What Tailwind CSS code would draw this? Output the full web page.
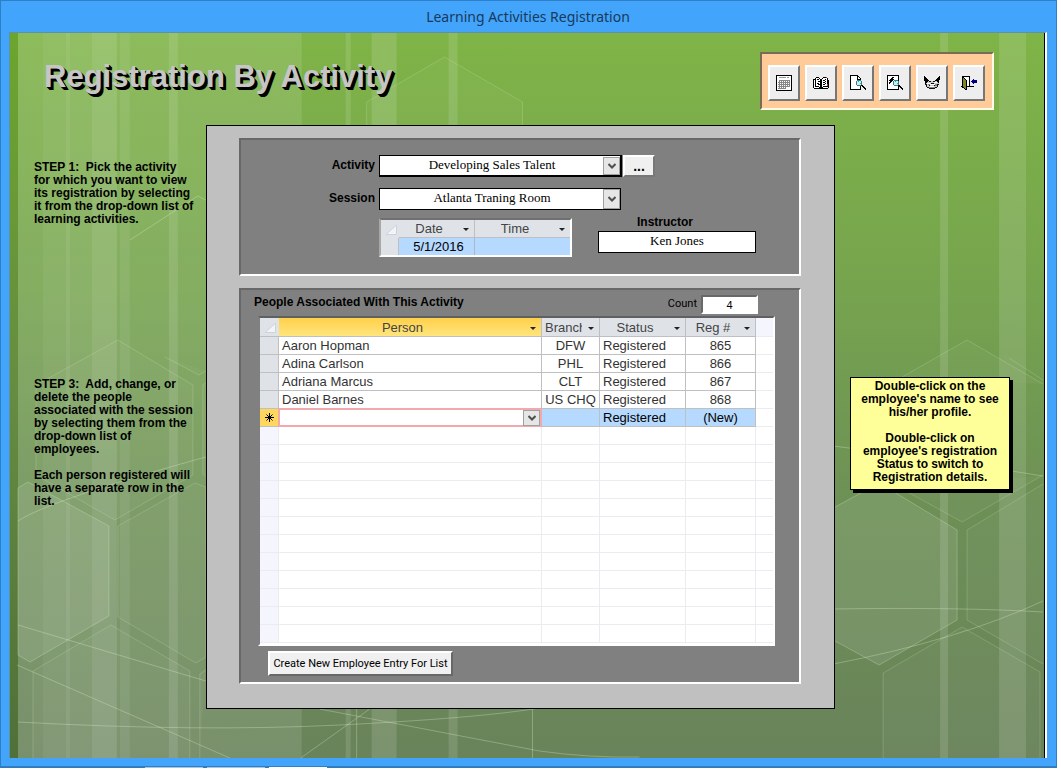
<!DOCTYPE html>
<html lang="en">
<head>
<meta charset="utf-8">
<title>Learning Activities Registration</title>
<script src="https://cdn.jsdelivr.net/npm/@tailwindcss/browser@4"></script>
</head>
<body class="flex min-h-screen flex-col bg-white font-['Liberation_Sans',sans-serif]">
<div class="flex flex-1 flex-col border border-[#2d7fc8] bg-[#43a4fb] pr-[9px] pb-2 pl-2">
  <div class="flex h-[31px] items-center justify-center font-['Noto_Sans',sans-serif] text-sm text-[#173a5c]">Learning Activities Registration</div>

  <main class="relative flex-1 border border-[#5a92ae] border-b-0 border-r-2 border-r-white bg-[#7fb24b]">
    <!-- backdrop: stripes, hexagons and arcs -->
    <svg class="absolute inset-0 h-full w-full border-r border-black" viewBox="10 33 1035 725" preserveAspectRatio="none" aria-hidden="true">
      <defs>
        <linearGradient id="base" x1="0" y1="0" x2="0" y2="1">
          <stop offset="0" stop-color="#7fb447"/><stop offset=".35" stop-color="#76a44e"/><stop offset=".65" stop-color="#6d9056"/><stop offset="1" stop-color="#69835a"/>
        </linearGradient>
        <linearGradient id="edge" x1="0" y1="0" x2="0" y2="1">
          <stop offset="0" stop-color="#6ca52e"/><stop offset=".5" stop-color="#658c41"/><stop offset="1" stop-color="#4f7038"/>
        </linearGradient>
      </defs>
      <rect x="10" y="33" width="1035" height="725" fill="url(#base)"/>
      <g fill="#fff">
        <rect x="18" y="33" width="284" height="725" opacity=".11"/>
        <rect x="43" y="33" width="74" height="725" opacity=".05"/>
        <rect x="66" y="33" width="4" height="725" opacity=".07"/>
        <rect x="92" y="33" width="25" height="725" opacity=".08"/>
        <rect x="120" y="33" width="10" height="725" opacity=".07"/>
        <rect x="169" y="33" width="9" height="725" opacity=".11"/>
        <rect x="346" y="33" width="5" height="725" opacity=".12"/>
        <rect x="372" y="33" width="25" height="725" opacity=".13"/>
        <rect x="449" y="33" width="9" height="725" opacity=".12"/>
        <rect x="941" y="33" width="8" height="725" opacity=".13"/>
        <rect x="1000" y="33" width="27" height="725" opacity=".12"/>
      </g>
      <rect x="10" y="33" width="8" height="725" fill="url(#edge)"/>
      <g fill="#fff" fill-opacity=".09" stroke="#e4f2d4" stroke-opacity=".28" stroke-width="1">
        <path d="M18 488 28 482 109 526V616L30 662 18 655Z"/>
        <path d="M834 508 880 483 958 530V620L880 665 834 640Z"/>
      </g>
      <g fill="#fff" fill-opacity=".03" stroke="#e4f2d4" stroke-opacity=".2" stroke-width="1">
        <path d="M115 520 193 475V385L118 340 36 385V475Z"/>
        <path d="M206 487 195 483 118 526V617L196 663 206 657Z"/>
        <path d="M33 758V671L111 625 190 671V758"/>
        <path d="M206 670 200 674V758"/>
        <path d="M206 371 199 375 165 357"/>
        <path d="M206 476 203 474V385L206 383"/>
        <path d="M367 126V102L445 57 523 102V126"/>
        <path d="M1044 484 968 530V620L1044 664"/>
        <path d="M884 758V673L963 627 1041 672V758"/>
        <path d="M905 490 963 522 1044 475M903 377 968 340 1044 384"/>
        <path d="M1044 380 1010 358"/>
      </g>
      <g fill="none" stroke="#e8f5da" stroke-opacity=".3" stroke-width="1">
        <path d="M18 521Q50 500 206 457M18 625 206 681M17 665 230 758M18 722Q200 732 340 725T540 708"/>
        <path d="M130 240 198 196 206 200M320 709 540 751Q590 758 640 757M301 758 370 709M357 709V758M533 709V758"/>
        <path d="M834 609Q960 607 1044 612M834 664Q960 640 1044 601M834 446Q940 458 1044 476"/>
      </g>
    </svg>

    <div class="relative">
      <header class="flex h-[92px] items-start justify-between pr-[51px] pl-[34px]">
        <h1 class="pt-6 text-[31px] leading-10 font-bold text-[#c6c6c6] [text-shadow:1px_1px_0_#000,2px_2px_0_#000,3px_3px_0_#000]">Registration By Activity</h1>
        <div class="mt-[19px] flex h-[58px] items-center gap-[5px] border-2 border-[#fffbe9] border-t-[#7b6a55] border-l-[#7b6a55] bg-[#ffcb99] pt-1 pr-[7px] pl-[6px]" role="toolbar" aria-label="Form tools">
          <button aria-label="Datasheet" class="grid h-9 w-8 place-items-center border-2 border-white border-r-[#777] border-b-[#777] bg-[#eee]">
            <svg width="16" height="16" viewBox="0 0 16 16" shape-rendering="crispEdges" fill="none" aria-hidden="true"><path d="M.5.5h15v15H.5z" fill="#fff" stroke="#000"/><path d="M3 2.500h7M11 2.500h2" stroke="#999"/><path d="M3 5.500h11M2 7.500h12M2 9.500h12M2 11.500h12M2 13.500h8M3.500 5v9M5.500 5v9M7.500 5v9M9.500 5v9M11.500 5v7M13.500 5v7" stroke="#888"/></svg>
          </button>
          <button aria-label="Catalog" class="grid h-9 w-8 place-items-center border-2 border-white border-r-[#777] border-b-[#777] bg-[#eee]">
            <svg width="16" height="16" viewBox="0 0 16 16" shape-rendering="crispEdges" fill="none" aria-hidden="true"><path d="M1 3h2V2h3v1h2v1h1V3h1V2h4v1h1v10H9v1H7v-1H1z" fill="#fff"/><path d="M2.500 3v9M.500 4v9M1 4.500h1M3 2.500h3M6.500 3v1M7.500 4v10M8.500 4v10M9.500 3v1M10 2.500h4M14.500 3v9M15.500 5v8M3 11.500h3M6 12.500h4M10 11.500h4M1 13.500h6M9 13.500h6M4 4.500h2M5 6.500h2M4 8.500h2M5 9.500h2M10 5.500h2M12 4.500h1M10 7.500h2M12 6.500h1M10 9.500h2M12 8.500h1" stroke="#000"/><path d="M13 2.500h1M14.500 9v2" stroke="#d32a3c"/></svg>
          </button>
          <button aria-label="Preview report" class="grid h-9 w-8 place-items-center border-2 border-white border-r-[#777] border-b-[#777] bg-[#eee]">
            <svg width="16" height="16" viewBox="0 0 16 16" shape-rendering="crispEdges" fill="none" aria-hidden="true"><path d="M0 0h8v1h1v1h1v1h1v12H0z" fill="#000"/><path d="M1 1h6v4h3v9H1zM8 2h1v1H8zM8 3h2v1H8z" fill="#fff"/><path d="M7 5h4v1h1v4h-1v1H7v-1H6V6h1z" fill="#baf4f4"/><path d="M7 5.500h4M6.500 6v4M11.500 6v4M7 10.500h4" stroke="#477b7b"/><path d="M8 6h1v1H8zM10 8h1v1h-1z" fill="#25baba"/><path d="M11 10h2v1h1v1h1v1h1v2h-1v-1h-1v-1h-1v-1h-1v-1h-1z" fill="#000"/></svg>
          </button>
          <button aria-label="Quick preview" class="grid h-9 w-8 place-items-center border-2 border-white border-r-[#777] border-b-[#777] bg-[#eee]">
            <svg width="16" height="16" viewBox="0 0 16 16" shape-rendering="crispEdges" fill="none" aria-hidden="true"><path d="M.5.5h11v14H.5z" fill="#fff" stroke="#000"/><path d="M5 2h2v1H6v1h1v1H6v1H5v1H4v1H3v1H2V7h1V6H2V5h1V4h1V3h1z" fill="#000"/><path d="M7 5h4v1h1v4h-1v1H7v-1H6V6h1z" fill="#baf4f4"/><path d="M7 5.500h4M6.500 6v4M11.500 6v4M7 10.500h4" stroke="#477b7b"/><path d="M8 6h1v1H8zM10 8h1v1h-1z" fill="#25baba"/><path d="M11 10h2v1h1v1h1v1h1v2h-1v-1h-1v-1h-1v-1h-1v-1h-1z" fill="#000"/></svg>
          </button>
          <button aria-label="Contacts" class="grid h-9 w-8 place-items-center border-2 border-white border-r-[#777] border-b-[#777] bg-[#eee]">
            <svg width="16" height="16" viewBox="0 0 16 16" shape-rendering="crispEdges" fill="none" aria-hidden="true"><path d="M2 5h3v1h6V5h3v3h1v2h-2v3h-2v1H5v-1H3v-3H1V8h1z" fill="#ccc"/><path d="M0 1h1v1h1v1h1v1h1v1h1v1H4v1H3v1H2v1H1V6H0zM15 1h1v4h-1v3h-1V7h-1V6h-2V5h1V4h1V3h1V2h1z" fill="#000"/><path d="M5 6.500h2M9 6.500h2M1 9.500h2M13 9.500h2M2.500 10v2M13.500 10v2M3 12.500h2M11 12.500h2M5 13.500h6M7 8.500h3M5 10.500h1M10 10.500h1" stroke="#111"/><path d="M3 8h3v1H3zM10 7h3v1h-3zM6 9h5v1H6zM6 11h4v1H6z" fill="#fff"/><path d="M4 9h2v1H4zM11 9h2v2h-2zM5 12h6v1H5z" fill="#888"/></svg>
          </button>
          <button aria-label="Close form" class="grid h-9 w-8 place-items-center border-2 border-white border-r-[#777] border-b-[#777] bg-[#eee]">
            <svg width="16" height="16" viewBox="0 0 16 16" shape-rendering="crispEdges" fill="none" aria-hidden="true"><path d="M2 1h6v10H2z" fill="#fff"/><path d="M1 1.500h8M8.500 1v10M0 11.500h2M6 11.500h7" stroke="#000"/><path d="M1 1h1v1h1v1h1v1h1v11H4v-1H3v-1H2v-1H1z" fill="#858521"/><path d="M1.500 1v12M2 2.500h1M3 3.500h1M4 4.500h1M5.500 5v10M2 12.500h1M3 13.500h1M4 14.500h1" stroke="#000"/><path d="M10 6h1V5h1V4h1v1h3v3h-3v1h-1V8h-1V7h-1z" fill="#000080"/></svg>
          </button>
        </div>
      </header>

      <div class="flex items-start">
        <aside class="w-[196px] shrink-0 pt-9 pl-6 text-xs leading-[13px] font-bold text-black">
          <p class="whitespace-pre">STEP 1:  Pick the activity
for which you want to view
its registration by selecting
it from the drop-down list of
learning activities.</p>
          <p class="mt-38 whitespace-pre">STEP 3:  Add, change, or
delete the people
associated with the session
by selecting them from the
drop-down list of
employees.</p>
          <p class="mt-[13px] whitespace-pre">Each person registered will
have a separate row in the
list.</p>
        </aside>

        <section class="mb-12 min-w-0 flex-1 border border-black bg-[#c0c0c0] pt-3 pr-[33px] pb-6 pl-8">
          <div class="h-[138px] border-2 border-white border-t-[#686868] border-l-[#686868] bg-[#808080] pt-[15px] pl-[66px]">
            <div class="flex h-[22px] items-center">
              <label for="activity" class="w-[68px] pb-[2px] text-right text-xs leading-4 font-bold">Activity</label>
              <div class="relative ml-1 h-[22px] w-[243px]">
                <select id="activity" class="block h-full w-full appearance-none rounded-none border-2 border-t border-l border-black bg-white pr-4 pb-[2px] font-['Liberation_Serif',serif] text-[13px] leading-4 [text-align-last:center]"><option>Developing Sales Talent</option></select>
                <span class="pointer-events-none absolute top-[2px] right-[2px] bottom-[2px] grid w-[17px] place-items-center border border-[#a0a0a0] bg-[#e6e6e6]"><svg width="8" height="6" viewBox="0 0 8 6" fill="none" stroke="#505050" stroke-width="2"><path d="M.5 1 4 4.500 7.500 1"/></svg></span>
              </div>
              <button class="ml-px h-[22px] w-8 border-2 border-white border-r-[#777] border-b-[#777] bg-[#f0f0f0] text-sm leading-4 font-bold" aria-label="Browse activities">...</button>
            </div>
            <div class="mt-[11px] flex h-[22px] items-center">
              <label for="session" class="w-[68px] pb-[2px] text-right text-xs leading-4 font-bold">Session</label>
              <div class="relative ml-1 h-[22px] w-[242px]">
                <select id="session" class="block h-full w-full appearance-none rounded-none border border-black bg-white pr-4 pb-[2px] font-['Liberation_Serif',serif] text-[13px] leading-4 [text-align-last:center]"><option>Atlanta Traning Room</option></select>
                <span class="pointer-events-none absolute top-px right-px bottom-px grid w-[17px] place-items-center border border-[#a0a0a0] bg-[#e6e6e6]"><svg width="8" height="6" viewBox="0 0 8 6" fill="none" stroke="#505050" stroke-width="2"><path d="M.5 1 4 4.500 7.500 1"/></svg></span>
              </div>
            </div>
            <div class="mt-2 flex items-start">
              <table class="ml-[72px] w-[193px] table-fixed border-separate border-spacing-0 border-2 border-white border-t-[#707070] border-l-[#a8a8a8] text-[13px] leading-[17px]">
                <colgroup><col class="w-[18px]"><col class="w-[76px]"><col></colgroup>
                <thead>
                  <tr class="h-[17px] bg-[#dfe3e8] text-[#444]">
                    <td class="p-0"><svg class="ml-1" width="12" height="11" viewBox="0 0 12 11"><path d="M11.500 1v9.500H1z" fill="#f2f4f7" stroke="#ccd3dc"/></svg></td>
                    <th scope="col" class="border-r border-b border-[#bcc0c6] p-0 font-normal"><span class="flex items-center"><span class="flex-1 pr-1">Date</span><svg class="mt-[2px] mr-[5px]" width="6" height="3" viewBox="0 0 6 3"><path d="M0 0h6L3 3z" fill="#222"/></svg></span></th>
                    <th scope="col" class="border-b border-[#bcc0c6] p-0 font-normal"><span class="flex items-center"><span class="flex-1 pr-1">Time</span><svg class="mt-[2px] mr-[5px]" width="6" height="3" viewBox="0 0 6 3"><path d="M0 0h6L3 3z" fill="#222"/></svg></span></th>
                  </tr>
                </thead>
                <tbody>
                  <tr class="h-[17px] bg-[#b5d9ff]">
                    <td class="border-r border-[#bcc0c6] bg-[#dfe3e8] p-0"></td>
                    <td class="border-r border-[#a9b8c8] p-0 pl-1 text-center">5/1/2016</td>
                    <td class="p-0"></td>
                  </tr>
                </tbody>
              </table>
              <div class="ml-[26px] flex w-[158px] flex-col">
                <label for="instructor" class="mb-[5px] pr-6 text-center text-xs leading-[8px] font-bold">Instructor</label>
                <input id="instructor" value="Ken Jones" class="h-[22px] w-full border border-black bg-white pb-[2px] text-center font-['Liberation_Serif',serif] text-[13px]">
              </div>
            </div>
          </div>

          <div class="mt-3 flex flex-col border-2 border-white border-t-[#686868] border-l-[#686868] bg-[#808080] pt-[3px] pb-[6px]">
            <div class="flex h-[23px] items-start justify-between pr-[41px] pl-[13px]">
              <h2 class="text-xs leading-[18px] font-bold">People Associated With This Activity</h2>
              <div class="flex items-center gap-1 pt-[2px]">
                <label for="count" class="font-['Roboto','Liberation_Sans',sans-serif] text-[11px]">Count</label>
                <input id="count" value="4" class="h-[19px] w-[57px] border-2 border-white border-t-[#686868] border-l-[#686868] bg-white text-center text-[11px]">
              </div>
            </div>
            <div class="mr-6 ml-[17px] overflow-hidden border-2 border-white border-t-[#606060] border-l-[#808080] bg-white">
              <table class="w-full table-fixed border-separate border-spacing-0 text-[13px] leading-[17px] text-[#333] [&_td]:p-0 [&_th]:p-0">
                <colgroup><col class="w-[19px]"><col><col class="w-[58px]"><col class="w-[86px]"><col class="w-[70px]"><col class="w-[17px]"></colgroup>
                <thead>
                  <tr class="h-[19px] bg-[#dfe3e8] text-[#444] [&>th]:border-r [&>th]:border-b [&>th]:border-[#bcc0c6] [&>th]:font-normal">
                    <td class="border-b border-[#bcc0c6]"><svg class="ml-1" width="12" height="11" viewBox="0 0 12 11"><path d="M11.500 1v9.500H1z" fill="#f2f4f7" stroke="#ccd3dc"/></svg></td>
                    <th scope="col" class="bg-linear-to-b from-[#ffd048] to-[#ffe57c]"><span class="flex items-center"><span class="flex-1 pr-1">Person</span><svg class="mt-[2px] mr-[5px]" width="6" height="3" viewBox="0 0 6 3"><path d="M0 0h6L3 3z" fill="#222"/></svg></span></th>
                    <th scope="col"><span class="flex items-center justify-between"><span class="ml-[3px] w-[37px] overflow-hidden text-left">Branch</span><svg class="mt-[2px] mr-[5px]" width="6" height="3" viewBox="0 0 6 3"><path d="M0 0h6L3 3z" fill="#222"/></svg></span></th>
                    <th scope="col"><span class="flex items-center"><span class="flex-1 pr-1">Status</span><svg class="mt-[2px] mr-[5px]" width="6" height="3" viewBox="0 0 6 3"><path d="M0 0h6L3 3z" fill="#222"/></svg></span></th>
                    <th scope="col"><span class="flex items-center"><span class="flex-1 pr-1">Reg #</span><svg class="mt-[2px] mr-[5px]" width="6" height="3" viewBox="0 0 6 3"><path d="M0 0h6L3 3z" fill="#222"/></svg></span></th>
                    <td class="border-b border-[#ebebf2] bg-[#f5f5fd]"></td>
                  </tr>
                </thead>
                <tbody class="[&_td]:border-r [&_td]:border-b [&_td]:border-[#c0c0c0] [&_td:last-child]:border-r-0 [&_td:last-child]:border-[#ebebf0]">
                  <tr class="h-[18px]"><td class="bg-[#dfe3e8]"></td><td><span class="pl-[3px]">Aaron Hopman</span></td><td class="text-center">DFW</td><td><span class="pl-[3px]">Registered</span></td><td class="text-center">865</td><td></td></tr>
                  <tr class="h-[18px]"><td class="bg-[#dfe3e8]"></td><td><span class="pl-[3px]">Adina Carlson</span></td><td class="text-center">PHL</td><td><span class="pl-[3px]">Registered</span></td><td class="text-center">866</td><td></td></tr>
                  <tr class="h-[18px]"><td class="bg-[#dfe3e8]"></td><td><span class="pl-[3px]">Adriana Marcus</span></td><td class="text-center">CLT</td><td><span class="pl-[3px]">Registered</span></td><td class="text-center">867</td><td></td></tr>
                  <tr class="h-[18px]"><td class="bg-[#dfe3e8]"></td><td><span class="pl-[3px]">Daniel Barnes</span></td><td class="text-center whitespace-nowrap">US CHQ</td><td><span class="pl-[3px]">Registered</span></td><td class="text-center">868</td><td></td></tr>
                  <tr class="h-[18px] bg-[#b5d9ff] text-black"><td class="bg-[#ffd75e]"><svg class="mx-auto" width="9" height="9" viewBox="0 0 9 9" stroke="#000" role="img" aria-label="New record"><path d="M4.500 0v9M0 4.500h9M1.500 1.500l6 6M7.500 1.500l-6 6"/></svg></td>
                    <td><div class="relative -m-px h-[19px]"><select aria-label="Person" class="block h-full w-full appearance-none rounded-none border-2 border-[#f2a9ae] bg-white"><option></option></select><span class="pointer-events-none absolute top-[2px] right-[2px] bottom-px grid w-[17px] place-items-center border border-[#a0a0a0] bg-[#e6e6e6]"><svg width="8" height="6" viewBox="0 0 8 6" fill="none" stroke="#505050" stroke-width="2"><path d="M.5 1 4 4.500 7.500 1"/></svg></span></div></td>
                    <td></td><td><span class="pl-[3px]">Registered</span></td><td class="text-center">(New)</td><td class="bg-white"></td></tr>
                </tbody>
                <tbody class="[&_td]:border-r [&_td]:border-b [&_td]:border-[#ebebf0] [&_td:first-child]:bg-[#f5f5fd] [&_td:last-child]:border-r-0">
                  <tr class="h-[18px]"><td></td><td></td><td></td><td></td><td></td><td></td></tr>
                  <tr class="h-[18px]"><td></td><td></td><td></td><td></td><td></td><td></td></tr>
                  <tr class="h-[18px]"><td></td><td></td><td></td><td></td><td></td><td></td></tr>
                  <tr class="h-[18px]"><td></td><td></td><td></td><td></td><td></td><td></td></tr>
                  <tr class="h-[18px]"><td></td><td></td><td></td><td></td><td></td><td></td></tr>
                  <tr class="h-[18px]"><td></td><td></td><td></td><td></td><td></td><td></td></tr>
                  <tr class="h-[18px]"><td></td><td></td><td></td><td></td><td></td><td></td></tr>
                  <tr class="h-[18px]"><td></td><td></td><td></td><td></td><td></td><td></td></tr>
                  <tr class="h-[18px]"><td></td><td></td><td></td><td></td><td></td><td></td></tr>
                  <tr class="h-[18px]"><td></td><td></td><td></td><td></td><td></td><td></td></tr>
                  <tr class="h-[18px]"><td></td><td></td><td></td><td></td><td></td><td></td></tr>
                  <tr class="h-[18px]"><td></td><td></td><td></td><td></td><td></td><td></td></tr>
                </tbody>
              </table>
              <div class="h-px bg-white"></div>
            </div>
            <button class="mt-[5px] ml-[27px] h-[25px] w-[185px] border-2 border-white border-r-[#686868] border-b-[#686868] bg-[#f0f0f0] font-['Roboto','Liberation_Sans',sans-serif] text-[11px] leading-4">Create New Employee Entry For List</button>
          </div>
        </section>

        <aside class="w-[210px] shrink-0 pt-[252px] pl-[15px]">
          <div class="w-[160px] border border-black bg-[#ffff99] pt-[2px] pb-[5px] text-center text-xs leading-[13px] font-bold whitespace-nowrap shadow-[3px_3px_0_#000]">
            <p>Double-click on the<br>employee's name to see<br>his/her profile.</p>
            <p class="mt-[13px]">Double-click on<br>employee's registration<br>Status to switch to<br>Registration details.</p>
          </div>
        </aside>
      </div>
    </div>
  </main>
</div>
<!-- sliver of the taskbar behind the window -->
<footer class="flex h-1 gap-1 bg-linear-to-b from-[#3579b5] from-25% to-white to-25% pl-[145px]">
  <span class="h-px w-[58px] bg-[#a9c6e0]"></span><span class="h-px w-[58px] bg-[#a9c6e0]"></span><span class="h-px w-[58px] bg-white"></span>
</footer>
</body>
</html>
